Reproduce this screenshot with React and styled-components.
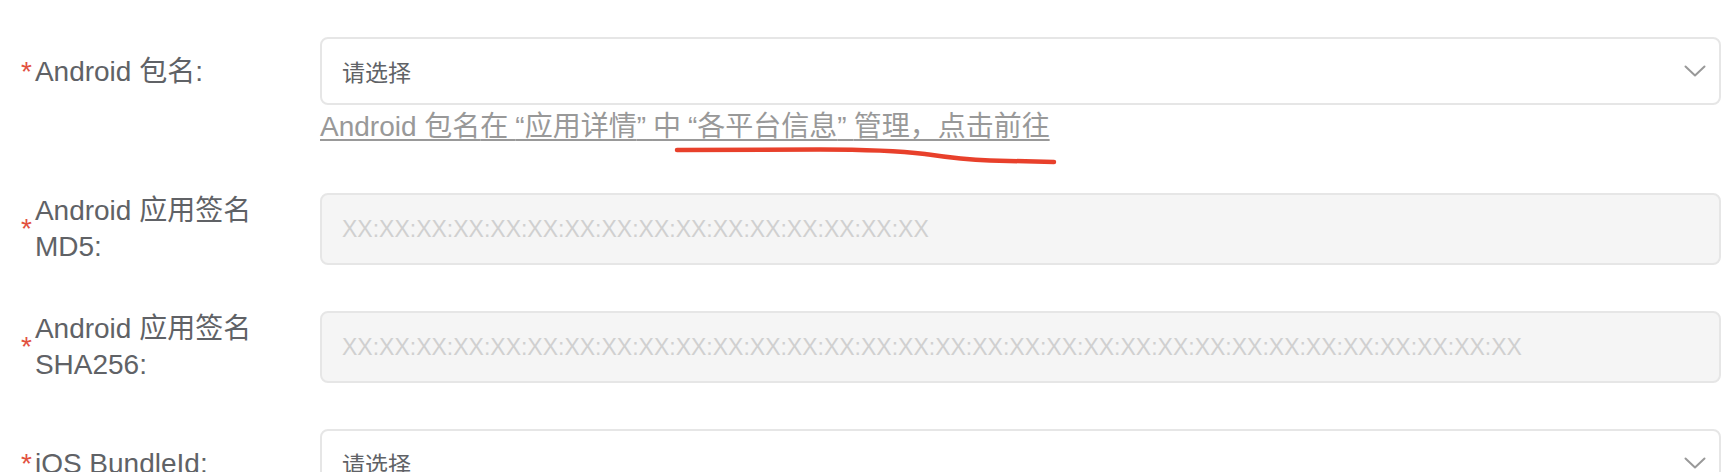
import React from "react";
import styled, { createGlobalStyle } from "styled-components";

const GlobalStyle = createGlobalStyle`
  html, body {
    margin: 0;
    padding: 0;
    background: #fff;
  }
  body {
    font-family: "Liberation Sans", "Noto Sans CJK SC", sans-serif;
    overflow: hidden;
  }
`;

const Form = styled.div`
  width: 1722px;
  box-sizing: border-box;
  padding: 37px 1px 0 0;
`;

const FormItem = styled.div`
  display: flex;
  align-items: flex-start;
  margin-bottom: 46px;
`;

const Label = styled.label`
  width: 320px;
  min-height: ${(p) => p.$h}px;
  flex-shrink: 0;
  box-sizing: border-box;
  padding: ${(p) => (p.$h === 68 ? "2px" : "0")} 24px 0 21px;
  display: flex;
  align-items: center;
  font-size: 28px;
  line-height: 36px;
  color: #606266;
`;

const Star = styled.span`
  flex-shrink: 0;
  color: #e2513f;
  margin-right: 3px;
`;

const Content = styled.div`
  flex: 1;
  min-width: 0;
`;

const Box = styled.div`
  box-sizing: border-box;
  height: ${(p) => (p.$disabled ? 72 : 68)}px;
  border: 2px solid #e6e6e6;
  border-radius: 8px;
  background: ${(p) => (p.$disabled ? "#f5f5f5" : "#fff")};
  display: flex;
  align-items: center;
  justify-content: space-between;
  padding: 0 13px 0 20px;
  font-size: 23px;
  color: ${(p) => (p.$disabled ? "#d0d0d0" : "#606266")};
  white-space: nowrap;
  overflow: hidden;
`;

const Hint = styled.div`
  position: relative;
  padding-top: 2px;
  font-size: 28px;
  line-height: 40px;
  color: #999;
  white-space: nowrap;
  text-decoration: underline;
  text-decoration-thickness: 2px;
  text-underline-offset: 3px;
`;

/* widens the gap after a glyph, so curly quotes get the room they have in the original */
const Gap = styled.span`
  letter-spacing: 7px;
`;

const Scribble = styled.svg`
  position: absolute;
  left: 350px;
  top: 36px;
  pointer-events: none;
`;

const Chevron = () => (
  <svg width="22" height="12" viewBox="0 0 22 12" fill="none">
    <polyline
      points="1.5,1.5 11,10.5 20.5,1.5"
      stroke="#999"
      strokeWidth="2"
      strokeLinecap="round"
      strokeLinejoin="round"
    />
  </svg>
);

const hex = (n) => Array(n).fill("XX").join(":");

const Select = () => (
  <Box>
    <span>请选择</span>
    <Chevron />
  </Box>
);

export default function App() {
  return (
    <>
      <GlobalStyle />
      <Form>
        <FormItem>
          <Label $h={68}>
            <Star>*</Star>
            <span>Android 包名:</span>
          </Label>
          <Content>
            <Select />
            <Hint>
              {"Android 包名"}<Gap>在</Gap>{"“应用详情"}<Gap>”</Gap><Gap>中</Gap>{"“各平台信息"}<Gap>”</Gap>{"管理，点击前往"}
              <Scribble width="400" height="32" viewBox="0 0 400 32">
                <path
                  d="M7 9 L150 8.5 C200 8.5 230 10 255 13 C275 16 290 18.5 320 19.5 L384 21"
                  stroke="#e8402b"
                  strokeWidth="4.5"
                  strokeLinecap="round"
                  fill="none"
                />
              </Scribble>
            </Hint>
          </Content>
        </FormItem>

        <FormItem>
          <Label $h={72}>
            <Star>*</Star>
            <span>Android 应用签名 MD5:</span>
          </Label>
          <Content>
            <Box $disabled>{hex(16)}</Box>
          </Content>
        </FormItem>

        <FormItem>
          <Label $h={72}>
            <Star>*</Star>
            <span>Android 应用签名 SHA256:</span>
          </Label>
          <Content>
            <Box $disabled>{hex(32)}</Box>
          </Content>
        </FormItem>

        <FormItem>
          <Label $h={68}>
            <Star>*</Star>
            <span>iOS BundleId:</span>
          </Label>
          <Content>
            <Select />
          </Content>
        </FormItem>
      </Form>
    </>
  );
}
